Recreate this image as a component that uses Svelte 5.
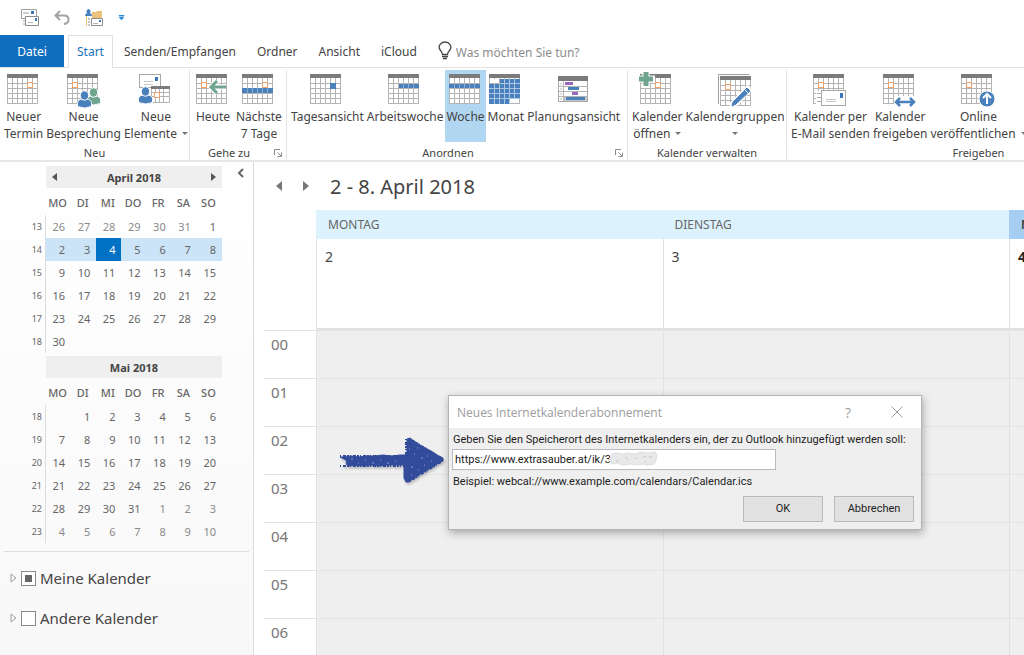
<!--
  Kalenderansicht mit Menüband, Datumsnavigator und Abonnement-Dialog
-->

<script>
  const reiter = ['Senden/Empfangen', 'Ordner', 'Ansicht', 'iCloud'];

  const gruppen = [
    {
      titel: 'Neu',
      klasse: 'neu',
      knoepfe: [
        { zeilen: ['Neuer', 'Termin'], icone: 'termin' },
        { zeilen: ['Neue', 'Besprechung'], icone: 'besprechung' },
        { zeilen: ['Neue', 'Elemente'], icone: 'elemente', menue: true }
      ]
    },
    {
      titel: 'Gehe zu',
      klasse: 'gehe',
      starter: true,
      knoepfe: [
        { zeilen: ['Heute'], icone: 'heute' },
        { zeilen: ['Nächste', '7 Tage'], icone: 'naechste' }
      ]
    },
    {
      titel: 'Anordnen',
      klasse: 'anordnen',
      starter: true,
      knoepfe: [
        { zeilen: ['Tagesansicht'], icone: 'tag' },
        { zeilen: ['Arbeitswoche'], icone: 'arbeitswoche' },
        { zeilen: ['Woche'], icone: 'woche', aktiv: true },
        { zeilen: ['Monat'], icone: 'monat' },
        { zeilen: ['Planungsansicht'], icone: 'planung' }
      ]
    },
    {
      titel: 'Kalender verwalten',
      klasse: 'verwalten',
      knoepfe: [
        { zeilen: ['Kalender', 'öffnen'], icone: 'oeffnen', menue: true },
        { zeilen: ['Kalendergruppen', ''], icone: 'gruppen', menue: true }
      ]
    },
    {
      titel: 'Freigeben',
      klasse: 'freigeben',
      knoepfe: [
        { zeilen: ['Kalender per', 'E-Mail senden'], icone: 'mail' },
        { zeilen: ['Kalender', 'freigeben'], icone: 'freigeben' },
        { zeilen: ['Online', 'veröffentlichen'], icone: 'online', menue: true }
      ]
    }
  ];

  const wochentage = ['MO', 'DI', 'MI', 'DO', 'FR', 'SA', 'SO'];

  // versatz: Position des Monatsersten in der ersten Zeile
  function wochen(ersteKw, versatz, tage, tageVormonat, anzahl) {
    const zeilen = [];
    for (let z = 0; z < 6; z++) {
      const zellen = [];
      for (let s = 0; s < 7; s++) {
        const n = z * 7 + s - versatz + 1;
        if (n < 1) zellen.push({ text: tageVormonat ? tageVormonat + n : '', fremd: true });
        else if (n > tage) zellen.push({ text: anzahl > tage ? n - tage : '', fremd: true });
        else zellen.push({ text: n, fremd: false });
      }
      zeilen.push({ kw: ersteKw + z, zellen });
    }
    return zeilen;
  }

  const monate = [
    { name: 'April 2018', navigation: true, kwAktiv: 14, heute: 4, wochen: wochen(13, 6, 30, 31, 30) },
    { name: 'Mai 2018', wochen: wochen(18, 1, 31, 0, 41) }
  ];

  const tage = [
    { name: 'MONTAG', datum: 2 },
    { name: 'DIENSTAG', datum: 3 },
    { name: 'MITTWOCH', datum: 4, heute: true }
  ];

  const stunden = ['00', '01', '02', '03', '04', '05', '06'];

  let suche = '';
  let adresse = 'https://www.extrasauber.at/ik/3';
  let meine = false;
  let meineTeilweise = true;
  let andere = false;
</script>

{#snippet raster()}
  <rect x="1" y="1" width="30" height="29" fill="#fff" />
  <path d="M1.5 4v26M6.5 4v26M11.5 4v26M16.5 4v26M21.5 4v26M26.5 4v26M31.5 4v26M1 9.5h31M1 14.5h31M1 19.5h31M1 24.5h31M1 29.5h31" stroke="#b4b4b4" fill="none" />
  <rect x="1" y="0" width="31" height="4" fill="#7b7b7b" />
{/snippet}

{#snippet marke(x, y)}
  <rect {x} {y} width="5" height="5" fill="#fff" stroke="#f0a46c" />
{/snippet}

{#snippet person(x, y, farbe)}
  <g transform="translate({x} {y})" fill={farbe} stroke="#fff">
    <path d="M-.5 15.500v-3C-.5 9 2 8 6.500 8s7 1 7 4.500v3q-7 3-14 0z" />
    <ellipse cx="6.500" cy="4.500" rx="4.200" ry="4.700" />
  </g>
{/snippet}

{#snippet bild(name)}
  <svg class="bild" viewBox="0 0 36 34" aria-hidden="true">
    {#if name === 'elemente'}
      <rect x="1.500" y=".5" width="21" height="13" fill="#fff" stroke="#a8a8a8" />
      <path d="M6 7.500h9M6 10.500h9" stroke="#c8c8c8" />
      <rect x="17" y="3" width="3" height="4" fill="#3f74b8" />
      <path d="M13 12h19v17H13z" fill="#fff" />
      <path d="M13.500 14v15M17.500 14v15M21.500 14v15M25.500 14v15M31.500 14v15M13 18.500h19M13 22.500h19M13 28.500h19" stroke="#b4b4b4" />
      <path d="M13 12h19v3H13z" fill="#7b7b7b" />
      {@render marke(16.5, 18.5)}
      {@render person(1, 13, '#4a81bd')}
    {:else if name === 'planung'}
      <rect x="2.500" y="3.500" width="29" height="24" fill="#fff" stroke="#a8a8a8" />
      <path d="M7.500 7v20M3 12.500h28M3 17.500h28M3 22.500h28M4 10h2M4 15h2M4 20h2M4 25h2" stroke="#b4b4b4" />
      <rect x="2" y="2" width="30" height="5" fill="#7b7b7b" />
      <path d="M8 23h23v4H8z" fill="#c8c8c8" />
      <path d="M9 8h8v3H9zM16 18h6v3h-6z" fill="#9a67bd" />
      <path d="M12 13h11v3H12zM10 23h19v3H10z" fill="#4a81bd" />
    {:else}
      <g class:tief={name === 'gruppen'}>
        {#if name === 'gruppen'}
          <path d="M-.5 28V-1.500h31" fill="none" stroke="#a0a0a0" />
        {/if}
        {@render raster()}
      </g>
    {/if}
    {#if name === 'termin'}
      {@render marke(21.5, 8.5)}
    {:else if name === 'besprechung'}
      {@render marke(6.5, 8.5)}
      {@render person(21, 14, '#6fa58f')}
      {@render person(12, 17, '#4a81bd')}
    {:else if name === 'heute'}
      {@render marke(6.5, 8.5)}
      <path d="M31 13H17M22 7l-6 6 6 6" fill="none" stroke="#fff" stroke-width="5" />
      <path d="M31 13H16M22 7l-6 6 6 6" fill="none" stroke="#6fa58f" stroke-width="3" />
    {:else if name === 'naechste'}
      {@render marke(21.5, 8.5)}
      <path d="M1 16.500h31" stroke="#4a81bd" stroke-width="5" />
      <path d="M6.500 14v5M11.500 14v5M16.500 14v5M21.500 14v5M26.500 14v5" stroke="#86abd5" />
    {:else if name === 'tag'}
      <rect x="21" y="9" width="6" height="6" fill="#4a81bd" />
    {:else if name === 'arbeitswoche'}
      <path d="M12 12h20" stroke="#4a81bd" stroke-width="4" />
      <path d="M16.500 10v4M21.500 10v4M26.500 10v4" stroke="#86abd5" />
    {:else if name === 'woche'}
      <path d="M1 12h31" stroke="#4a81bd" stroke-width="4" />
      <path d="M6.500 10v4M11.500 10v4M16.500 10v4M21.500 10v4M26.500 10v4" stroke="#86abd5" />
    {:else if name === 'monat'}
      <path d="M12 5h20v20H22v5H1V10h11z" fill="#4a81bd" />
      <path d="M6.500 10v20M11.500 10v20M16.500 5v25M21.500 5v25M26.500 5v20M12 9.500h20M1 14.500h31M1 19.500h31M1 24.500h31" stroke="#a9c5e4" />
      <path d="M2 5h9v4H2zM22 25h9v4h-9z" fill="#fff" />
    {:else if name === 'oeffnen'}
      {@render marke(16.5, 8.5)}
      <path d="M7-3v17M-1 5h17" stroke="#fff" stroke-width="7" />
      <path d="M7-2v14M0 5h14" stroke="#6fa58f" stroke-width="5" />
    {:else if name === 'gruppen'}
      {@render marke(8.5, 10.5)}
      <path d="M33 13L14 33" stroke="#fff" stroke-width="7" />
      <path d="M30 14l3 3-14 13-4 2 1-4z" fill="#4a81bd" stroke="#4a81bd" />
      <path d="M28 16l4 4" stroke="#fff" />
    {:else if name === 'mail'}
      {@render marke(6.5, 8.5)}
      <path d="M4 17h8v15H4z" fill="#fff" />
      <path d="M5 19.500h4M5 23.500h4M5 27.500h4" stroke="#a8a8a8" />
      <rect x="9.500" y="16.500" width="24" height="15" fill="#fff" stroke="#a8a8a8" />
      <path d="M14 25.500h10M14 27.500h10" stroke="#c8c8c8" />
      <rect x="28" y="19" width="3" height="5" fill="#3f74b8" />
    {:else if name === 'freigeben'}
      {@render marke(6.5, 8.5)}
      <path d="M12 22h21v10H12z" fill="#fff" />
      <path d="M14 28h18M18 24l-4 4 4 4M28 24l4 4-4 4" fill="none" stroke="#4a81bd" stroke-width="2.500" />
    {:else if name === 'online'}
      {@render marke(6.5, 8.5)}
      <circle cx="27" cy="25" r="8" fill="#4a81bd" stroke="#fff" />
      <path d="M27 30v-9M23 24l4-4 4 4" fill="none" stroke="#fff" stroke-width="2" />
    {/if}
  </svg>
{/snippet}

<div class="fenster">
  <header>
    <div class="schnellzugriff">
      <button aria-label="Alle Ordner senden/empfangen">
        <svg width="18" height="18" viewBox="0 0 18 18">
          <path d="M.5.5h15v9H.500zM2 4h6M2 12h2M2 15h2" fill="none" stroke="#a0a0a0" />
          <path d="M10 2h3v3h-3z" fill="#3f74b8" />
          <path d="M4.500 7.500h13v9h-13z" fill="#fff" stroke="#8c8c8c" />
          <path d="M7 13.500h5" stroke="#b4b4b4" />
          <path d="M14 9h2v3h-2z" fill="#3f74b8" />
        </svg>
      </button>
      <button aria-label="Rückgängig">
        <svg width="16" height="16" viewBox="0 0 16 16">
          <path d="M6 1L1.500 5.500 6 10M2 5.500h8c6 0 6 8 0 8.500" fill="none" stroke="#a3a3a3" stroke-width="2" />
        </svg>
      </button>
      <button aria-label="Neue Elemente">
        <svg width="18" height="18" viewBox="0 0 18 18">
          <path d="M7 3h4l1-1h5v9H7z" fill="#ecc27f" />
          <path d="M1 7h1v10H1z" fill="#ecc27f" />
          <path d="M3 10h2M3 13h2M3 16h2" stroke="#8c8c8c" />
          <ellipse cx="3.500" cy="2.500" rx="2" ry="2.500" fill="#4a81bd" />
          <path d="M0 7q0-3 3.500-3T7 7z" fill="#4a81bd" />
          <path d="M6.500 9.500h11v7h-11z" fill="#fff" stroke="#8c8c8c" />
          <path d="M8 14.500h5" stroke="#b4b4b4" />
          <path d="M14 11h2v2h-2z" fill="#3f74b8" />
        </svg>
      </button>
      <button aria-label="Symbolleiste anpassen">
        <svg width="7" height="6" viewBox="0 0 7 6"><path d="M1 0h5v1H1zM1 2h5L3.500 5z" fill="#2f8ad6" stroke="#2f8ad6" stroke-width=".5" /></svg>
      </button>
    </div>

    <nav class="reiter">
      <button class="datei">Datei</button>
      <button class="gewaehlt">Start</button>
      {#each reiter as name}
        <button>{name}</button>
      {/each}
      <label class="suche">
        <svg width="14" height="20" viewBox="0 0 14 20" aria-hidden="true">
          <path d="M4.500 13.500q0-2-2-4C-1 5 3 1 7 1s8 4 4.500 8.500q-2 2-2 4z" fill="none" stroke="#444" stroke-width="1.300" />
          <path d="M4 15.500h6M5 17.500h4" stroke="#444" stroke-width="1.600" />
        </svg>
        <input type="text" placeholder="Was möchten Sie tun?" aria-label="Was möchten Sie tun?" bind:value={suche} />
      </label>
    </nav>

    <div class="menueband">
      {#each gruppen as gruppe}
        <section class="gruppe {gruppe.klasse}">
          <div class="knoepfe">
            {#each gruppe.knoepfe as knopf}
              <button class="knopf" class:aktiv={knopf.aktiv}>
                {@render bild(knopf.icone)}
                {#each knopf.zeilen as zeile, i}
                  <span class="zeile">
                    {zeile}
                    {#if knopf.menue && i === knopf.zeilen.length - 1}
                      <i class="pfeil"></i>
                    {/if}
                  </span>
                {/each}
              </button>
            {/each}
          </div>
          <div class="titel" class:mit-starter={gruppe.starter}>
            <span>{gruppe.titel}</span>
            {#if gruppe.starter}
              <button class="starter" aria-label="{gruppe.titel}: Optionen">
                <svg width="8" height="8" viewBox="0 0 8 8"><path d="M.5 6V.5H6M3.500 3.500L7 7M7.500 3.500v4h-4" fill="none" stroke="#8c8c8c" /></svg>
              </button>
            {/if}
          </div>
        </section>
      {/each}
    </div>
  </header>

  <div class="inhalt">
    <aside>
      <button class="einklappen" aria-label="Ordnerbereich minimieren">
        <svg width="7" height="10" viewBox="0 0 7 10"><path d="M6 1L2 5l4 4" fill="none" stroke="#666" stroke-width="2" /></svg>
      </button>

      {#each monate as monat}
        <div class="monat">
          <div class="monatskopf">
            {#if monat.navigation}
              <button aria-label="Vorheriger Monat"><i class="links"></i></button>
            {/if}
            <strong>{monat.name}</strong>
            {#if monat.navigation}
              <button aria-label="Nächster Monat"><i class="rechts"></i></button>
            {/if}
          </div>
          <table>
            <thead>
              <tr>
                <td></td>
                {#each wochentage as tag}
                  <th scope="col">{tag}</th>
                {/each}
              </tr>
            </thead>
            <tbody>
              {#each monat.wochen as woche}
                <tr class:woche-aktiv={woche.kw === monat.kwAktiv}>
                  <th scope="row">{woche.kw}</th>
                  {#each woche.zellen as zelle}
                    <td class:fremd={zelle.fremd} class:heute={!zelle.fremd && zelle.text === monat.heute}>{zelle.text}</td>
                  {/each}
                </tr>
              {/each}
            </tbody>
          </table>
        </div>
      {/each}

      <div class="kalenderliste">
        <label>
          <svg width="7" height="10" viewBox="0 0 7 10" aria-hidden="true"><path d="M1 1l5 4-5 4z" fill="none" stroke="#a0a0a0" /></svg>
          <input type="checkbox" bind:checked={meine} bind:indeterminate={meineTeilweise} />
          Meine Kalender
        </label>
        <label>
          <svg width="7" height="10" viewBox="0 0 7 10" aria-hidden="true"><path d="M1 1l5 4-5 4z" fill="none" stroke="#a0a0a0" /></svg>
          <input type="checkbox" bind:checked={andere} />
          Andere Kalender
        </label>
      </div>
    </aside>

    <main>
      <div class="zeitraum">
        <button aria-label="Vorherige Woche"><i class="links"></i></button>
        <button aria-label="Nächste Woche"><i class="rechts"></i></button>
        <h1>2 - 8. April 2018</h1>
      </div>

      <div class="tage kopf">
        <span></span>
        {#each tage as tag}
          <div class="tagname" class:heute={tag.heute}>{tag.name}</div>
        {/each}
      </div>
      <div class="tage ganztags">
        <span></span>
        {#each tage as tag}
          <div class="tagfeld" class:heute={tag.heute}>{tag.datum}</div>
        {/each}
      </div>
      {#each stunden as stunde}
        <div class="tage stunde">
          <span>{stunde}</span>
          {#each tage as tag}
            <div></div>
          {/each}
        </div>
      {/each}
    </main>
  </div>

  <svg class="hinweis" viewBox="0 0 110 50" aria-hidden="true">
    <g fill="#324c9b" stroke="#324c9b" stroke-linejoin="round">
      <path d="M3 21l5 0 6-1 8 1 7-1 9 0 8-1 9 1 8-1 7 0V3l3-1 5 4 5 3 5 3 6 3 6 4 6 3v3l-6 3-6 4-6 3-6 4-5 3-5 4-3 0-2-4V29l-9 0-8 0-8 1-9-1-8 1-7-1-6 1-3-2 1-2-1-2z" />
      <path d="M3 20h66M3 30h66M69 3v42M73 3l31 19M73 45l31-19" fill="none" stroke-width="2" stroke-dasharray="1 2 3 1 2 1" />
    </g>
    <path d="M8 26h1M14 23h2M21 27h1M28 24h1M35 27h2M43 24h1M50 27h2M58 25h1M72 13h1M77 18h1M74 31h2M81 34h1M84 22h2M90 20h1M87 29h1M94 25h1M74 39h1M80 12h1" stroke="#8d9bc9" />
  </svg>

  <div class="dialog" role="dialog" aria-labelledby="dialogtitel">
    <div class="dialogkopf">
      <h2 id="dialogtitel">Neues Internetkalenderabonnement</h2>
      <button aria-label="Hilfe">?</button>
      <button aria-label="Schließen">
        <svg width="12" height="12" viewBox="0 0 12 12"><path d="M.5.5l11 11M11.500.5l-11 11" stroke="#9c9c9c" /></svg>
      </button>
    </div>
    <div class="dialoginhalt">
      <label for="adresse">Geben Sie den Speicherort des Internetkalenders ein, der zu Outlook hinzugefügt werden soll:</label>
      <div class="eingabe">
        <input id="adresse" type="text" bind:value={adresse} />
        <svg class="verdeckt" viewBox="0 0 54 18" aria-hidden="true">
          <path d="M7 4l5-1 6 1 5-1 7 1 6-2 8 1 6-1 2 3-1 5-2 4-6 1-5-1-6 1-7-1-7 1-7-2-4 1-3-4z" fill="#e9e9e9" stroke="#dedede" />
          <path d="M11 12l3-2M20 7l3 3M30 7l2 2M38 6l3 1M44 7h3M40 12h1" stroke="#c4c4c4" />
        </svg>
      </div>
      <p>Beispiel: webcal://www.example.com/calendars/Calendar.ics</p>
      <div class="aktionen">
        <button>OK</button>
        <button>Abbrechen</button>
      </div>
    </div>
  </div>
</div>

<style>
  :global(body) {
    margin: 0;
    background: #fff;
  }

  .fenster {
    position: relative;
    display: flex;
    flex-direction: column;
    height: 100vh;
    overflow: hidden;
    font-family: 'Noto Sans', 'Open Sans', sans-serif;
    font-size: 12px;
    color: #444;
  }

  button,
  input {
    font: inherit;
    color: inherit;
  }

  button {
    padding: 0;
    border: 0;
    background: none;
    white-space: nowrap;
  }

  svg {
    display: block;
    flex: none;
  }

  /* === Kopfbereich === */

  .schnellzugriff {
    display: flex;
    align-items: center;
    gap: 15px;
    height: 35px;
    padding-left: 21px;
  }

  .reiter {
    display: flex;
    align-items: stretch;
    gap: 1px;
    height: 32px;
    border-bottom: 1px solid #e1e1e1;
  }

  .reiter button {
    padding: 0 10px;
  }

  .reiter .datei {
    width: 64px;
    margin-right: 3px;
    background: #106ebe;
    color: #fff;
  }

  .reiter .gewaehlt {
    box-sizing: border-box;
    width: 45px;
    padding: 0 0 2px;
    margin-bottom: -1px;
    border: 1px solid #e1e1e1;
    border-bottom: 0;
    background: #fff;
    color: #1a73c0;
  }

  .suche {
    display: flex;
    align-items: center;
    gap: 4px;
    padding-left: 10px;
  }

  .suche input {
    width: 160px;
    padding: 2px 0 0;
    border: 0;
    outline: 0;
  }

  .suche input::placeholder {
    color: #8c8c8c;
    opacity: 1;
  }

  .menueband {
    display: flex;
    height: 92px;
    border-bottom: 2px solid #e6e6e6;
  }

  .gruppe {
    flex: none;
    box-sizing: border-box;
    display: flex;
    flex-direction: column;
    margin: 2px 0 0;
    border-right: 1px solid #e4e4e4;
  }

  .neu { width: 190px; }
  .gehe { width: 97px; }
  .anordnen { width: 341px; }
  .verwalten { width: 159px; }
  .freigeben { width: 384px; }

  .knoepfe {
    display: flex;
    flex: none;
    gap: 1px;
    padding: 0 3px;
    height: 72px;
  }

  .gehe .knoepfe {
    gap: 3px;
    padding: 0 4px;
  }

  .knopf {
    display: flex;
    flex-direction: column;
    align-items: center;
    padding: 4px 1px 0;
  }

  .knopf.aktiv {
    background: #b1d6f1;
  }

  .bild {
    width: 36px;
    height: 34px;
    overflow: visible;
  }

  .tief {
    transform: translate(2px, 2px);
  }

  .zeile {
    display: flex;
    align-items: center;
    gap: 5px;
    min-height: 17px;
    line-height: 17px;
  }

  .pfeil {
    border: 3px solid transparent;
    border-top-color: #777;
    border-bottom: 0;
  }

  .titel {
    display: flex;
    align-items: center;
    justify-content: center;
    position: relative;
    padding-top: 4px;
    font-size: 11px;
    line-height: 14px;
  }

  .mit-starter {
    padding-right: 18px;
  }

  .starter {
    position: absolute;
    right: 4px;
  }

  /* === Seitenleiste === */

  .inhalt {
    display: flex;
    flex: 1;
    min-height: 0;
  }

  aside {
    position: relative;
    flex: none;
    box-sizing: border-box;
    width: 254px;
    padding-top: 4px;
    border-right: 1px solid #dcdcdc;
    background: linear-gradient(#fff, #f8f8f8);
  }

  .einklappen {
    position: absolute;
    top: 6px;
    right: 9px;
  }

  .monat {
    width: 192px;
    margin: 0 0 3px 30px;
    font-size: 11px;
  }

  .monatskopf {
    display: flex;
    align-items: center;
    height: 22px;
    margin-left: 16px;
    padding: 0 6px;
    background: #efefef;
  }

  .monatskopf strong {
    flex: 1;
    text-align: center;
    color: #444;
  }

  .links,
  .rechts {
    display: block;
    border: 4px solid transparent;
  }

  .links {
    border-left: 0;
    border-right: 5px solid #555;
  }

  .rechts {
    border-right: 0;
    border-left: 5px solid #555;
  }

  table {
    width: 100%;
    table-layout: fixed;
    border-collapse: separate;
    border-spacing: 0;
    color: #666;
  }

  thead td {
    width: 14px;
    padding: 0 2px 0 0;
  }

  thead th {
    height: 27px;
    padding: 2px 2px 0 0;
    box-sizing: border-box;
    font-weight: 500;
  }

  tbody th {
    box-sizing: border-box;
    padding: 0 3px 0 0;
    border-right: 1px solid #dcdcdc;
    font-size: 9px;
    font-weight: 400;
    text-align: right;
  }

  tbody td {
    height: 23px;
    padding: 0 6px 0 0;
    text-align: right;
  }

  .fremd {
    color: #8a8a8a;
  }

  .woche-aktiv td {
    background: #cce4f7;
  }

  .woche-aktiv .heute {
    background: #0072c6;
    color: #fff;
  }

  .kalenderliste {
    margin: 8px 4px 0;
    padding: 6px 6px 0;
    border-top: 1px solid #dcdcdc;
    font-size: 15px;
  }

  .kalenderliste label {
    display: flex;
    align-items: center;
    gap: 4px;
    height: 40px;
  }

  .kalenderliste input {
    appearance: none;
    box-sizing: border-box;
    width: 15px;
    height: 15px;
    margin: 0;
    border: 1px solid #8a8a8a;
    background: #fff;
  }

  .kalenderliste input:indeterminate {
    box-shadow: inset 0 0 0 3px #fff;
    background: #666;
  }

  /* === Wochenansicht === */

  main {
    flex: 1;
    min-width: 0;
    padding-left: 10px;
  }

  .zeitraum {
    display: flex;
    align-items: center;
    gap: 21px;
    height: 48px;
    padding-left: 12px;
  }

  .zeitraum i {
    border-width: 5px;
  }

  .zeitraum .links {
    border-left-width: 0;
    border-right: 6px solid #777;
  }

  .zeitraum .rechts {
    border-right-width: 0;
    border-left: 6px solid #777;
  }

  h1 {
    margin: 0;
    font-size: 20px;
    font-weight: 400;
  }

  .tage {
    display: grid;
    grid-template-columns: 52px 1fr 1fr 15px;
  }

  .tage > * {
    min-width: 0;
    overflow: hidden;
    box-sizing: border-box;
  }

  .tagname {
    height: 29px;
    padding-left: 12px;
    background: #dcf2fd;
    line-height: 30px;
    color: #666;
  }

  .tagname.heute {
    background: #a6cef2;
    color: #444;
    font-weight: 700;
  }

  .tagfeld {
    height: 91px;
    padding: 8px;
    border-left: 1px solid #e1e1e1;
    border-bottom: 2px solid #e1e1e1;
    font-size: 14px;
  }

  .tagfeld.heute {
    color: #222;
    font-weight: 700;
  }

  .stunde {
    height: 48px;
  }

  .stunde > span {
    padding: 3px 0 0 7px;
    border-top: 1px solid #e1e1e1;
    font-size: 15px;
    color: #777;
  }

  .stunde > div {
    border-left: 1px solid #e1e1e1;
    border-top: 1px solid #e4e4e4;
    background: #efefef;
  }

  /* === Hinweispfeil === */

  .hinweis {
    position: absolute;
    left: 337px;
    top: 436px;
    width: 110px;
    height: 50px;
    filter: drop-shadow(1px 2px 1px #bbb);
  }

  /* === Dialog === */

  .dialog {
    position: absolute;
    left: 448px;
    top: 395px;
    box-sizing: border-box;
    width: 474px;
    border: 1px solid #b4b4b4;
    background: #efefef;
    box-shadow: 1px 3px 8px rgba(0, 0, 0, 0.3);
    font-family: Roboto, 'Open Sans', sans-serif;
    font-size: 11px;
    color: #222;
  }

  .dialogkopf {
    display: flex;
    align-items: center;
    gap: 40px;
    height: 32px;
    padding: 0 18px 0 8px;
    background: #fff;
    color: #9c9c9c;
    font-family: 'Open Sans', 'Noto Sans', sans-serif;
  }

  h2 {
    flex: 1;
    margin: 0;
    font-size: 12px;
    font-weight: 400;
  }

  .dialogkopf button {
    font-size: 14px;
  }

  .dialoginhalt {
    padding: 4px 7px 7px 4px;
    line-height: 16px;
    white-space: nowrap;
  }

  .eingabe {
    position: relative;
    margin: 1px 0 4px -1px;
  }

  .eingabe input {
    display: block;
    box-sizing: border-box;
    width: 324px;
    height: 21px;
    padding: 0 2px;
    border: 1px solid #b9b9bf;
    background: #fff;
  }

  .verdeckt {
    position: absolute;
    left: 153px;
    top: 1px;
    width: 54px;
    height: 18px;
  }

  p {
    margin: 0;
  }

  .aktionen {
    display: flex;
    justify-content: flex-end;
    gap: 11px;
    margin-top: 6px;
  }

  .aktionen button {
    box-sizing: border-box;
    width: 80px;
    height: 26px;
    border: 1px solid #b9b9bf;
    background: #e1e1e1;
  }
</style>
